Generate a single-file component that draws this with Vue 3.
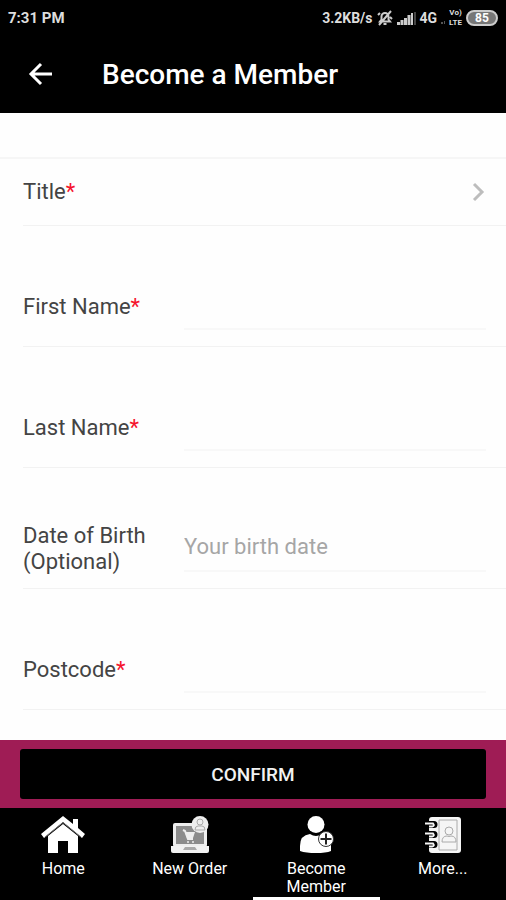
<style>
body {
  margin: 0;
  background: #fff;
}
</style>
<style scoped>
.page {
  display: flex;
  flex-direction: column;
  min-height: 100vh;
  background: #fefefe;
  color: #444;
  font-family: Roboto, "Liberation Sans", sans-serif;
}
button, input, select {
  font-family: inherit;
}
.status {
  display: flex;
  align-items: center;
  justify-content: space-between;
  height: 36px;
  padding: 0 8px;
  background: #000;
  color: #ddd;
  font-size: 15px;
  font-weight: 700;
}
.status_right {
  display: flex;
  align-items: center;
  gap: 4px;
  font-size: 14px;
}
.volte {
  display: grid;
  font-size: 8px;
  line-height: 10px;
  text-align: center;
}
.battery {
  box-sizing: border-box;
  width: 32px;
  border: 2px solid #ccc;
  border-radius: 8px;
  background: #777;
  color: #fff;
  font-size: 12px;
  line-height: 12px;
  text-align: center;
}
.header {
  display: flex;
  align-items: center;
  gap: 48px;
  height: 77px;
  padding: 0 26px;
  background: #000;
  color: #fff;
}
.header h1 {
  margin: 0;
  font-size: 28px;
  font-weight: 500;
  line-height: 32px;
}
.back {
  display: flex;
  padding: 0;
  border: none;
  background: none;
  color: inherit;
}
.form {
  display: flex;
  flex: 1;
  flex-direction: column;
}
.fields {
  flex: 1;
  margin-top: 44px;
  padding-bottom: 30px;
  border-top: 2px solid #f6f6f6;
}
.row {
  display: grid;
  grid-template-columns: 161px 1fr;
  align-items: center;
  min-height: 52px;
  margin-left: 23px;
  padding: 55px 20px 13px 0;
  border-bottom: 1px solid #f2f2f2;
}
.row_select {
  grid-template-columns: 161px 1fr 14px;
  padding: 7px 20px 7px 0;
}
.row label {
  font-size: 22px;
  line-height: 26px;
  white-space: pre-line;
}
.required {
  color: #f5142d;
}
.row input, .row select {
  box-sizing: border-box;
  width: 100%;
  min-width: 0;
  height: 46px;
  padding: 0 0 4px;
  border: none;
  border-radius: 0;
  background: none;
  color: #444;
  font-size: 22px;
  outline: none;
}
.row input {
  border-bottom: 2px solid #f8f8f8;
}
.row input::placeholder {
  color: #a6a6a6;
  opacity: 1;
}
.row select {
  appearance: none;
}
.confirm {
  padding: 9px 20px;
  background: #9f1c55;
}
.confirm button {
  width: 100%;
  height: 50px;
  border: none;
  border-radius: 3px;
  background: #000;
  color: #f2f2f2;
  font-size: 19px;
  font-weight: 500;
}
.nav {
  display: grid;
  grid-template-columns: repeat(4, 1fr);
  height: 92px;
  background: #000;
}
.nav a {
  display: flex;
  flex-direction: column;
  align-items: center;
  gap: 6px;
  box-sizing: border-box;
  padding: 8px 28px 0;
  border-bottom: 3px solid transparent;
  color: #fff;
  font-size: 16px;
  line-height: 18px;
  text-align: center;
  text-decoration: none;
}
.nav a span {
  margin: 0 -8px;
}
.nav a.active {
  border-color: #fff;
}
</style>
<template>
<div class="page">
  <div class="status">
    <span>7:31 PM</span>
    <div class="status_right">
      <span>3.2KB/s</span>
      <svg width="16" height="16" viewBox="0 0 16 16" fill="none" stroke="#ccc" stroke-width="2">
        <path d="M3 11.500h10l-1.500-2V6.500a3.500 3.500 0 0 0-7 0v3zM6.500 14h3M2 15 14 1M1 5l2-2M15 9l-2-2"/>
      </svg>
      <svg width="19" height="13" viewBox="0 0 19 13" fill="#ccc">
        <path d="M0 10h3v3H0zM3.500 8h3v5h-3zM7 6h3v7H7zM10.500 3h3v10h-3zM14 1h2v12h-2z"/>
        <path d="M17 0h2v13h-2z" fill="#444"/>
      </svg>
      <span>4G</span>
      <svg width="4" height="13" viewBox="0 0 4 13" fill="#555"><path d="M0 10h2v2H0zM3 9h1v3H3z"/></svg>
      <span class="volte"><span>Vo)</span><span>LTE</span></span>
      <span class="battery">85</span>
    </div>
  </div>
  <header class="header">
    <button class="back" type="button" aria-label="Back">
      <svg width="28" height="28" viewBox="0 0 28 28" fill="none" stroke="#fff" stroke-width="3">
        <path d="M26 13H5M15 3 5 13l10 10"/>
      </svg>
    </button>
    <h1>Become a Member</h1>
  </header>
  <form class="form" @submit.prevent>
    <div class="fields">
      <div class="row row_select">
        <label for="title">Title<span class="required">*</span></label>
        <select id="title" v-model="title">
          <option value=""></option>
          <option v-for="t in titles" :key="t">{{ t }}</option>
        </select>
        <svg width="14" height="20" viewBox="0 0 14 20" fill="none" stroke="#bdbdbd" stroke-width="3">
          <path d="m2 2 8 8-8 8"/>
        </svg>
      </div>
      <div v-for="field in fields" :key="field.id" class="row">
        <label :for="field.id">{{ field.label }}<span v-if="field.required" class="required">*</span></label>
        <input :id="field.id" v-model="form[field.id]" type="text" :placeholder="field.placeholder">
      </div>
    </div>
    <div class="confirm">
      <button type="submit">CONFIRM</button>
    </div>
  </form>
  <nav class="nav">
    <a href="#home">
      <svg width="44" height="38" viewBox="0 0 44 38" fill="#fff">
        <path d="M22 0 0 18l3 4L22 6l19 16 3-4-7-6V3h-5v5z"/>
        <path d="M22 8 7 20v17h10V25h10v12h10V20z"/>
        <path d="M4 21 22 6.500 40 21" fill="none" stroke="#777"/>
      </svg>
      <span>Home</span>
    </a>
    <a href="#order">
      <svg width="40" height="38" viewBox="0 0 40 38">
        <rect x="3" y="7" width="34" height="24" rx="2" fill="#eee"/>
        <path d="M6 10h28v18H6z" fill="#8c8c8c"/>
        <path d="M1 30h38v5q0 2-2 2H3q-2 0-2-2z" fill="#f2f2f2"/>
        <path d="M15 31h10l2 3H13z" fill="#aaa"/>
        <path d="m13 14 2 1 3 8h5" fill="none" stroke="#eee" stroke-width="2"/>
        <path d="M15 16h10l-2 6h-6z" fill="#eee"/>
        <circle cx="18" cy="26" r="1" fill="#eee"/><circle cx="23" cy="26" r="1" fill="#eee"/>
        <circle cx="30" cy="8.500" r="8.500" fill="#eee"/>
        <path d="M25 14q0-4 3-4h4q3 0 3 4z" fill="none" stroke="#aaa"/>
        <circle cx="30" cy="6" r="3" fill="none" stroke="#aaa"/>
      </svg>
      <span>New Order</span>
    </a>
    <a href="#member" class="active" aria-current="page">
      <svg width="38" height="38" viewBox="0 0 38 38">
        <circle cx="19" cy="8.500" r="8.500" fill="#fff"/>
        <path d="M3 35V30Q3 19 13 18q6 4 12 0l9 8v9q-5 2-15 2T3 35z" fill="#fff"/>
        <circle cx="29" cy="23" r="7.500" fill="#fff" stroke="#333"/>
        <path d="M29 17.500v11M23.500 23h11" stroke="#222" stroke-width="2"/>
      </svg>
      <span>Become Member</span>
    </a>
    <a href="#more">
      <svg width="38" height="38" viewBox="0 0 38 38">
        <rect x="5" y="1" width="32" height="36" rx="3" fill="#f5f5f5"/>
        <path d="M15 4h18v30H15zM18 26q0-6 5-6 2 1 4 0 5 0 5 6z" fill="none" stroke="#aaa"/>
        <circle cx="25" cy="15" r="4" fill="none" stroke="#aaa"/>
        <path d="M3 8.500h7M3 18.500h7M3 28.500h7" fill="none" stroke="#000" stroke-width="7" stroke-linecap="round"/>
        <path d="M1 7.500h8q2 2.500-1 3H5M1 17.500h8q2 2.500-1 3H5M1 27.500h8q2 2.500-1 3H5" fill="none" stroke="#f5f5f5" stroke-width="2"/>
      </svg>
      <span>More...</span>
    </a>
  </nav>
</div>
</template>
<script setup>
import { ref, reactive } from "vue";
const title = ref("");
const titles = ["Mr", "Mrs", "Miss", "Ms"];
const form = reactive({
  firstName: "",
  lastName: "",
  birthDate: "",
  postcode: ""
})
const fields = [
  { id: "firstName", label: "First Name", required: true },
  { id: "lastName", label: "Last Name", required: true },
  { id: "birthDate", label: "Date of Birth\n(Optional)", placeholder: "Your birth date" },
  { id: "postcode", label: "Postcode", required: true }
]
</script>
